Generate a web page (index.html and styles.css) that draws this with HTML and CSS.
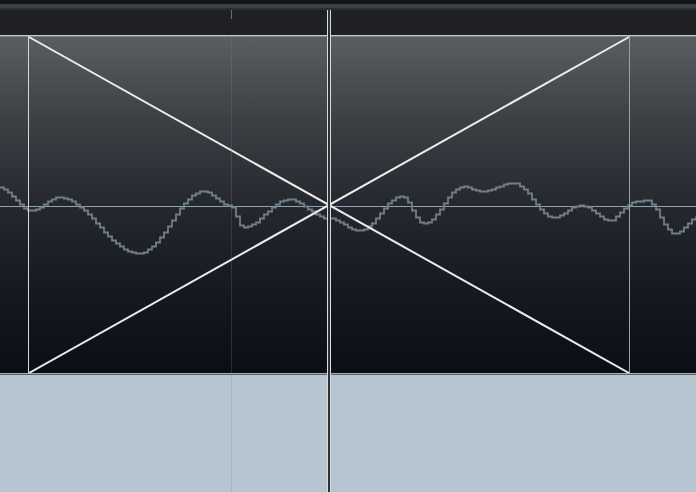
FILE: index.html
```html
<!doctype html>
<html>
<head>
  <link rel="stylesheet" href="styles.css">
</head>
<body>
  <div class="editor">
    <div class="top-edge"></div>
    <div class="top-stripe"></div>
    <div class="top-shadow"></div>
    <div class="ruler"><span class="tick"></span></div>
    <div class="track">
      <svg class="fade" width="696" height="337" viewBox="0 36 696 337">
        <line class="midline" x1="0" y1="206.5" x2="696" y2="206.5"></line>
        <path id="wave" class="wave" d=""></path>
        <line class="edge-in" x1="28.5" y1="36" x2="28.5" y2="373"></line>
        <line class="edge-out" x1="629.5" y1="36" x2="629.5" y2="373"></line>
        <line class="curve" x1="29" y1="37" x2="629" y2="373"></line>
        <line class="curve" x1="29" y1="373" x2="629" y2="37"></line>
      </svg>
    </div>
    <div class="lane"></div>
    <div class="grid-line"></div>
    <div class="cursor"></div>
  </div>

  <script>
    // rough peaks of the clip, page coords
    var peaks = [[-8,183],[0,187],[33,210],[60,197],[140,253],[205,191],[231,205],[245,227],
      [290,199],[330,218],[361,230],[403,196],[425,223],[465,186],[482,191],[515,183],
      [555,217],[582,205],[612,220],[628,208],[632,202],[648,200],[676,233],[700,217]];

    function levelAt(x){
      for(var i = 0; i < peaks.length - 1; i++){
        var a = peaks[i], b = peaks[i + 1];
        if(x >= a[0] && x <= b[0]){
          var t = (x - a[0]) / (b[0] - a[0]);
          var k = (1 - Math.cos(t * Math.PI)) / 2;
          return a[1] + (b[1] - a[1]) * k;
        }
      }
      return 206;
    }

    var d = "";
    var prev = null;
    for(var x = 0; x <= 696; x += 4){
      var y = Math.round(levelAt(x + 2)) + 0.5;
      if(prev === null){
        d += "M0 " + y;
      } else {
        d += " V" + y;
      }
      d += " H" + (x + 4);
      prev = y;
    }
    document.getElementById("wave").setAttribute("d", d);
  </script>
</body>
</html>
```

FILE: styles.css
```css
body {
  margin: 0;
  background: #b7c4d1;
  font-family: "Liberation Sans", Arial, sans-serif;
  overflow: hidden;
}
.editor {
  position: relative;
  width: 696px;
  height: 492px;
  display: flex;
  flex-direction: column;
}
.top-edge {
  height: 4px;
  background: #141617;
}
.top-stripe {
  height: 4px;
  background: #3a4149;
}
.top-shadow {
  height: 2px;
  background: #2a2e34;
}
.ruler {
  position: relative;
  height: 25px;
  background: #1f2024;
}
.tick {
  position: absolute;
  left: 231px;
  top: 0;
  width: 1px;
  height: 9px;
  background: #6a6d71;
}
.track {
  height: 337px;
  border-top: 1px solid #c4c8cc;
  border-bottom: 1px solid #a9aeb3;
  background: linear-gradient(#5a5e63, #3c4045 25%, #25292f 50%, #151920 75%, #0b0e15);
  box-shadow: inset 0 1px #7d8287;
}
.fade {
  display: block;
}
.midline {
  stroke: #8ea3b7;
  stroke-width: 1;
}
.wave {
  fill: none;
  stroke: #737e8a;
  stroke-width: 1.8;
}
.edge-in {
  stroke: #d6d8da;
  stroke-width: 1;
}
.edge-out {
  stroke: #9ca1a6;
  stroke-width: 1;
}
.curve {
  stroke: #ececec;
  stroke-width: 2;
}
.lane {
  flex: 1;
  background: #b7c4d1;
  border-top: 1px solid #5a616a;
}
.grid-line {
  position: absolute;
  left: 231px;
  top: 36px;
  bottom: 0;
  width: 1px;
  background: rgba(120, 135, 150, 0.25);
}
.cursor {
  position: absolute;
  left: 327px;
  top: 10px;
  bottom: 0;
  width: 2px;
  border-left: 1px solid #d9dbdd;
  border-right: 1px solid #d9dbdd;
  background: #2c3037;
}
```
